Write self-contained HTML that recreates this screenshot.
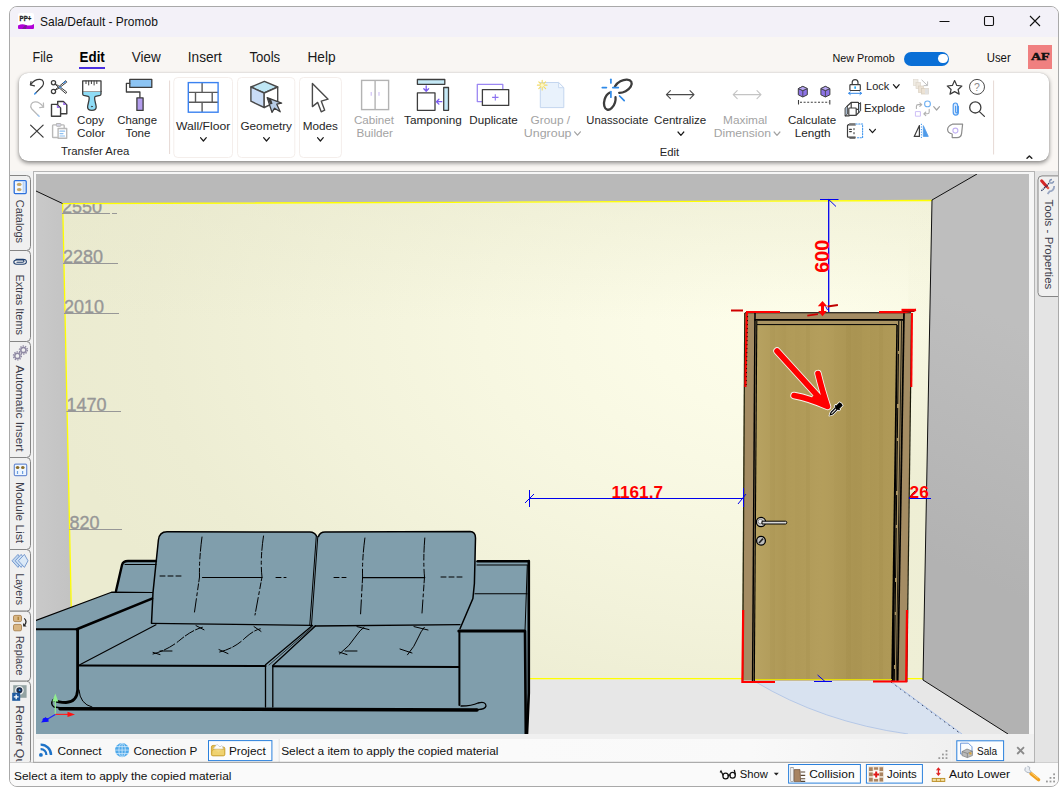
<!DOCTYPE html>
<html>
<head>
<meta charset="utf-8">
<title>Sala/Default - Promob</title>
<style>
*{box-sizing:border-box;margin:0;padding:0}
html,body{width:1061px;height:794px;overflow:hidden;background:#fff;font-family:"Liberation Sans",sans-serif;color:#1a1a1a}
.abs{position:absolute}
#win{position:absolute;left:9px;top:6px;width:1050px;height:781px;border:1px solid #a9a9a9;border-radius:8px;overflow:hidden;background:#f9f6f3}
/* everything inside #win is positioned in page coords via #in offset */
#in{position:absolute;left:-10px;top:-7px;width:1061px;height:794px}
#title{position:absolute;left:10px;top:7px;width:1048px;height:30px;background:#f3f1f8}
#title .t{position:absolute;left:39px;top:15px;font-size:12px;line-height:14px;color:#111;white-space:nowrap}
.menu{position:absolute;top:49px;font-size:14.5px;line-height:17px;color:#1a1a1a;white-space:nowrap}
#ribbon{position:absolute;left:19px;top:73px;width:1030px;height:88px;background:#fff;border-radius:9px;box-shadow:0 2px 4px rgba(0,0,0,.45),0 0 1px rgba(0,0,0,.25)}
.rl{position:absolute;font-size:12px;line-height:13px;color:#1a1a1a;text-align:center;white-space:nowrap}
.dis{color:#a6a6a6}
svg{position:absolute;overflow:visible}
.vt{position:absolute;left:10px;width:21px;font-size:12px;color:#333}
.vtxt{position:absolute;white-space:nowrap;transform-origin:0 0;transform:rotate(90deg);font-size:12.5px;line-height:14px;color:#3a3a3a;letter-spacing:.4px}
.tab{position:absolute;font-size:12px;line-height:14px;white-space:nowrap;color:#111}
</style>
</head>
<body>
<div id="win"><div id="in">

<!-- TITLE BAR -->
<div id="title"></div>
<svg style="left:17.8px;top:12.8px" width="18" height="18" viewBox="0 0 18 18">
  <rect x="0" y="0" width="16" height="16" rx="2" fill="#fff"/>
  <text x="1.6" y="7.6" font-family="Liberation Sans" font-weight="bold" font-size="8" fill="#222" stroke="#222" stroke-width=".35" textLength="11.6" lengthAdjust="spacingAndGlyphs">PP+</text>
  <path d="M0 12.5 Q4 10.5 8 12 T16 11 V15 Q16 16 15 16 H1 Q0 16 0 15Z" fill="#b100d8"/>
  <path d="M4 16 L7 12.2 L9 12.6 L8 16Z" fill="#7a1a9a"/>
</svg>
<!-- window controls -->
<svg style="left:930px;top:10px" width="120" height="24" viewBox="930 10 120 24" fill="none" stroke="#111" stroke-width="1.1">
  <path d="M939.5 21.5 H949.5"/>
  <rect x="984.5" y="16.5" width="9" height="9" rx="1.2"/>
  <path d="M1030 16 L1040 26 M1040 16 L1030 26"/>
</svg>

<!-- MENU BAR -->
<div class="abs" style="left:79px;top:67px;width:26px;height:2px;background:#4a2fe0"></div>
<div class="abs" style="left:903.7px;top:51.6px;width:45.7px;height:14px;border-radius:7px;background:#0a6fd6"></div>
<div class="abs" style="left:938.1px;top:53.8px;width:9.6px;height:9.6px;border-radius:5px;background:#fff"></div>
<div class="abs" style="left:1028px;top:45px;width:24px;height:23.6px;background:#f08080"></div>


<!-- RIBBON -->
<div id="ribbon"></div>
<!--RIB-START-->
<svg id="rib" style="left:0;top:0" width="1061" height="170" viewBox="0 0 1061 170" font-family="Liberation Sans">
<rect x="173.8" y="77.5" width="58.7" height="80" rx="4" fill="#fff" stroke="#f4eeeb" stroke-width="1"/>
<rect x="237.6" y="77.5" width="57.2" height="80" rx="4" fill="#fff" stroke="#f4eeeb" stroke-width="1"/>
<rect x="299.5" y="77.5" width="41.9" height="80" rx="4" fill="#fff" stroke="#f4eeeb" stroke-width="1"/>
<path d="M169.6,80.5 V154 M993.6,80.5 V154.5" stroke="#e6d9d4" stroke-width="1"/>
<text x="40" y="25.8" textLength="117.8" lengthAdjust="spacingAndGlyphs" font-size="12.2" fill="#111">Sala/Default - Promob</text>
<text x="32.6" y="61.7" textLength="20.3" lengthAdjust="spacingAndGlyphs" font-size="14.2" fill="#1a1a1a">File</text>
<text x="79.6" y="61.7" textLength="25.2" lengthAdjust="spacingAndGlyphs" font-size="14.2" fill="#000" font-weight="bold">Edit</text>
<text x="131.8" y="61.7" textLength="29.0" lengthAdjust="spacingAndGlyphs" font-size="14.2" fill="#1a1a1a">View</text>
<text x="187.8" y="61.7" textLength="34.1" lengthAdjust="spacingAndGlyphs" font-size="14.2" fill="#1a1a1a">Insert</text>
<text x="249.4" y="61.7" textLength="30.8" lengthAdjust="spacingAndGlyphs" font-size="14.2" fill="#1a1a1a">Tools</text>
<text x="307.4" y="61.7" textLength="28.2" lengthAdjust="spacingAndGlyphs" font-size="14.2" fill="#1a1a1a">Help</text>
<text x="832.4" y="62.4" textLength="62.3" lengthAdjust="spacingAndGlyphs" font-size="11.4" fill="#111">New Promob</text>
<text x="986.7" y="62.4" textLength="24.0" lengthAdjust="spacingAndGlyphs" font-size="12" fill="#111">User</text>
<text x="1030.9" y="60" textLength="18.7" lengthAdjust="spacingAndGlyphs" font-family="Liberation Serif" font-weight="bold" font-size="11" fill="#111" stroke="#111" stroke-width=".5">AF</text>
<text x="77.1" y="124" textLength="26.9" lengthAdjust="spacingAndGlyphs" font-size="11.7" fill="#262626">Copy</text>
<text x="77.1" y="136.5" textLength="28.1" lengthAdjust="spacingAndGlyphs" font-size="11.7" fill="#262626">Color</text>
<text x="117.2" y="124" textLength="39.8" lengthAdjust="spacingAndGlyphs" font-size="11.7" fill="#262626">Change</text>
<text x="125.4" y="136.5" textLength="25.0" lengthAdjust="spacingAndGlyphs" font-size="11.7" fill="#262626">Tone</text>
<text x="61" y="155.4" textLength="68.3" lengthAdjust="spacingAndGlyphs" font-size="11.7" fill="#262626">Transfer Area</text>
<text x="176" y="129.7" textLength="54.3" lengthAdjust="spacingAndGlyphs" font-size="11.7" fill="#262626">Wall/Floor</text>
<text x="240.5" y="129.7" textLength="51.4" lengthAdjust="spacingAndGlyphs" font-size="11.7" fill="#262626">Geometry</text>
<text x="302.8" y="129.7" textLength="35.2" lengthAdjust="spacingAndGlyphs" font-size="11.7" fill="#262626">Modes</text>
<path d="M200.5,137.60000000000002 L203.4,141.0 L206.3,137.60000000000002" fill="none" stroke="#1a1a1a" stroke-width="1.2" stroke-linecap="round" stroke-linejoin="round"/>
<path d="M263.6,137.60000000000002 L266.5,141.0 L269.4,137.60000000000002" fill="none" stroke="#1a1a1a" stroke-width="1.2" stroke-linecap="round" stroke-linejoin="round"/>
<path d="M317.5,137.60000000000002 L320.4,141.0 L323.29999999999995,137.60000000000002" fill="none" stroke="#1a1a1a" stroke-width="1.2" stroke-linecap="round" stroke-linejoin="round"/>
<text x="353.9" y="123.7" textLength="40.1" lengthAdjust="spacingAndGlyphs" font-size="11.7" fill="#a3a3a3">Cabinet</text>
<text x="356.5" y="136.5" textLength="36.5" lengthAdjust="spacingAndGlyphs" font-size="11.7" fill="#a3a3a3">Builder</text>
<text x="404.1" y="123.7" textLength="57.7" lengthAdjust="spacingAndGlyphs" font-size="11.7" fill="#262626">Tamponing</text>
<text x="469.3" y="123.7" textLength="48.5" lengthAdjust="spacingAndGlyphs" font-size="11.7" fill="#262626">Duplicate</text>
<text x="530.6" y="123.7" textLength="39.5" lengthAdjust="spacingAndGlyphs" font-size="11.7" fill="#a3a3a3">Group /</text>
<text x="523.8" y="136.5" textLength="47.7" lengthAdjust="spacingAndGlyphs" font-size="11.7" fill="#a3a3a3">Ungroup</text>
<path d="M574.6,131.8 L577.5,135.2 L580.4,131.8" fill="none" stroke="#a3a3a3" stroke-width="1.2" stroke-linecap="round" stroke-linejoin="round"/>
<text x="586.3" y="123.7" textLength="61.9" lengthAdjust="spacingAndGlyphs" font-size="11.7" fill="#262626">Unassociate</text>
<text x="654.1" y="123.8" textLength="52.1" lengthAdjust="spacingAndGlyphs" font-size="11.7" fill="#262626">Centralize</text>
<path d="M678.0,132.0 L680.9,135.39999999999998 L683.8,132.0" fill="none" stroke="#1a1a1a" stroke-width="1.2" stroke-linecap="round" stroke-linejoin="round"/>
<text x="659.8" y="155.5" textLength="19.4" lengthAdjust="spacingAndGlyphs" font-size="11.7" fill="#262626">Edit</text>
<text x="723.1" y="123.8" textLength="44.1" lengthAdjust="spacingAndGlyphs" font-size="11.7" fill="#a3a3a3">Maximal</text>
<text x="713.7" y="136.7" textLength="57.3" lengthAdjust="spacingAndGlyphs" font-size="11.7" fill="#a3a3a3">Dimension</text>
<path d="M774.1,132.0 L777,135.39999999999998 L779.9,132.0" fill="none" stroke="#a3a3a3" stroke-width="1.2" stroke-linecap="round" stroke-linejoin="round"/>
<text x="788" y="123.8" textLength="48.2" lengthAdjust="spacingAndGlyphs" font-size="11.7" fill="#262626">Calculate</text>
<text x="794.8" y="136.7" textLength="35.8" lengthAdjust="spacingAndGlyphs" font-size="11.7" fill="#262626">Length</text>
<text x="866.1" y="90.2" textLength="23.2" lengthAdjust="spacingAndGlyphs" font-size="11.7" fill="#262626">Lock</text>
<path d="M893.4,84.6 L896.3,88.0 L899.1999999999999,84.6" fill="none" stroke="#1a1a1a" stroke-width="1.2" stroke-linecap="round" stroke-linejoin="round"/>
<text x="864" y="111.8" textLength="41" lengthAdjust="spacingAndGlyphs" font-size="11.7" fill="#262626">Explode</text>
<path d="M869.6,129.3 L872.5,132.7 L875.4,129.3" fill="none" stroke="#1a1a1a" stroke-width="1.2" stroke-linecap="round" stroke-linejoin="round"/>
<path d="M933.7,106.6 L936.6,110.0 L939.5,106.6" fill="none" stroke="#a3a3a3" stroke-width="1.2" stroke-linecap="round" stroke-linejoin="round"/>
<path d="M1027,158.3 L1029.4,156 L1031.8,158.3" fill="none" stroke="#222" stroke-width="1.5" stroke-linecap="round" stroke-linejoin="round"/>
<!--ICONS-->
<g fill="none" stroke="#3d3d3d" stroke-width="1.25" stroke-linecap="round" stroke-linejoin="round">
  <!-- undo -->
  <path d="M31,81.6 L30.4,84.9 L34.4,85.8"/>
  <path d="M30.7,84.6 C33,81.4 36.5,79.2 40,79.4 C43.6,79.7 44.6,83.5 42.4,86.3 L35.8,92.9"/>
  <path d="M35.8,92.9 L34.7,94" stroke="#3b8fe8" stroke-width="1.5"/>
  <!-- redo (disabled) -->
  <g stroke="#b9b9b9">
    <path d="M43.4,103 L43.6,107.2 L39.7,107.6"/>
    <path d="M43.3,107 C41,103.5 38,101.6 35,101.8 C31.4,102 29.6,105.6 31.6,108.7 L38,115.2"/>
    <path d="M38,115.2 L39.1,116.3" stroke="#9cc4ee" stroke-width="1.5"/>
  </g>
  <!-- X -->
  <path d="M30.6,125.1 L43.1,137.1 M43.1,125.1 L30.6,137.1" stroke-width="1.3"/>
  <!-- scissors -->
  <circle cx="53.5" cy="82.8" r="2.1"/>
  <circle cx="53.5" cy="91.4" r="2.1"/>
  <path d="M55.1,89.9 L65.7,80.7 L66.7,82.2 L58.2,88.6Z" fill="#fff" stroke-width="1"/>
  <path d="M55.1,84.3 L65.7,93.5 L66.7,92 L58.2,85.6Z" fill="#fff" stroke-width="1"/>
  <path d="M63.6,83 L65.6,81.6 M59.4,86.9 L61,87.7" stroke="#3b8fe8" stroke-width="1.1"/>
  <!-- copy -->
  <path d="M57.7,104.6 V101.5 H63.4 L66.8,104.9 V113.8 H60.8" stroke-width="1.4"/>
  <path d="M63.2,101.8 V105 H66.6Z" fill="#9b6fe8" stroke="none"/>
  <path d="M51.5,104.4 H57 L60.6,108 V116.2 H51.5Z" fill="#fff" stroke-width="1.4"/>
  <path d="M56.9,104.8 V108.1 H60.3Z" fill="#9b6fe8" stroke="none"/>
  <!-- paste (disabled) -->
  <g stroke="#b9b9b9" stroke-width="1.4">
    <rect x="52.6" y="124.9" width="11.6" height="12.6" rx=".8"/>
    <rect x="56.4" y="123.5" width="4.5" height="2.8" rx=".6" fill="#d6d6e6" stroke-width="1"/>
    <rect x="58.1" y="128.5" width="8.6" height="9.8" fill="#fff"/>
    <path d="M60,131.2 H64.6 M60,133.6 H63 M60,136 H64.6" stroke="#8ec0f0" stroke-width="1.2"/>
  </g>
</g>
<!-- brush -->
<g stroke="#3d3d3d" stroke-width="1.3" stroke-linejoin="round" stroke-linecap="round">
  <path d="M82.7,91.4 H101 V94 Q101,95 100,95.3 L95.6,96.4 Q94.6,96.8 94.6,98 C94.6,101.5 96.2,104.5 96.2,107 C96.2,109.4 94.4,110.4 91.9,110.4 C89.4,110.4 87.6,109.4 87.6,107 C87.6,104.5 89.2,101.5 89.2,98 Q89.2,96.8 88.2,96.4 L83.7,95.3 Q82.7,95 82.7,94Z" fill="#8edcf6"/>
  <path d="M82.7,91.4 V80.9 H101 V91.4" fill="#fff"/>
  <path d="M86,81 V83.6 M88.7,81 V85 M91.4,81 V83.6 M94.1,81 V85 M96.8,81 V83.6" stroke-width="1"/>
  <circle cx="91.9" cy="106.6" r=".5" fill="#3d3d3d" stroke-width=".6"/>
</g>
<!-- roller -->
<g stroke="#3d3d3d" stroke-width="1.3" stroke-linejoin="round" stroke-linecap="round">
  <rect x="129.8" y="79.4" width="22" height="8" fill="#8cc4f3"/>
  <path d="M129.8,83.3 H126.4 V92 H139.9 V97.6" fill="none"/>
  <rect x="136.9" y="97.8" width="6.2" height="12.6" fill="#b39ded"/>
</g>
<!-- wall -->
<g fill="none" stroke-linejoin="miter">
  <path d="M188.3,92.4 H218 M188.3,102.2 H218 M202.1,82.5 V92.4 M195.5,92.4 V102.2 M212.2,92.4 V102.2 M202.1,102.2 V112" stroke="#5a5a5a" stroke-width="1.4"/>
  <rect x="188.3" y="82.6" width="29.8" height="29.6" stroke="#3b82f0" stroke-width="1.4"/>
</g>
<!-- geometry cube -->
<g stroke="#4a4a4a" stroke-width="1.4" stroke-linejoin="round">
  <path d="M250.9,87 L264.4,81.4 L277.7,87 L264.2,93Z" fill="#bfe7f6"/>
  <path d="M250.9,87 L264.2,93 V107.5 L250.9,101.2Z" fill="#c9dcf6"/>
  <path d="M264.2,93 L277.7,87 V101.2 L264.2,107.5Z" fill="#fff"/>
  <path d="M267.2,97.6 L281.6,103.2 L276.8,104.2 L280.2,111.8 L274.6,108.2 L272,112.4Z" fill="#b6cbe6" stroke="#3d3d3d" stroke-width="1.3"/>
  <path d="M267.2,97.6 L271,99 L272.6,103.8 L270.2,104.6Z" fill="#3d3d3d" stroke="none"/>
</g>
<!-- modes cursor -->
<path d="M312.4,83.6 V106.6 L317.7,102.4 L321.2,111.8 L324.7,110.2 L321.3,101.2 L328.1,99.2Z" fill="#fff" stroke="#4a4a4a" stroke-width="1.4" stroke-linejoin="round"/>
<!-- cabinet (disabled) -->
<g fill="none" stroke="#b3b3b3" stroke-width="1.4">
  <rect x="361.6" y="80.4" width="27" height="29.2"/>
  <path d="M375.1,80.4 V109.6"/>
  <path d="M371.2,92 V95.8 M379,92 V95.8" stroke="#cdbdf6" stroke-width="1.1"/>
</g>
<!-- tamponing -->
<g stroke="#3d3d3d" stroke-width="1.3" stroke-linejoin="round">
  <rect x="417.4" y="79.5" width="27.4" height="4.8" fill="#c5e9f6"/>
  <rect x="443.7" y="87.5" width="4.8" height="22.8" fill="#c5e9f6"/>
  <rect x="417.4" y="92.9" width="17.6" height="17.4" fill="#fff"/>
  <g stroke="#7b5cf0" stroke-width="1.3" fill="none" stroke-linecap="round">
    <path d="M426.2,86 V91 M423.8,88.8 L426.2,91.2 L428.6,88.8"/>
    <path d="M441.8,101.7 H436.6 M438.9,99.3 L436.5,101.7 L438.9,104.1"/>
  </g>
</g>
<!-- duplicate -->
<g fill="none" stroke-width="1.3" stroke-linejoin="round">
  <path d="M482.2,101.6 H477.3 V84.4 H502.8 V89" stroke="#9b86f2"/>
  <rect x="482.4" y="89.6" width="26.3" height="15.8" fill="#fff" stroke="#3d3d3d"/>
  <path d="M495.3,94.2 V100.6 M492.1,97.4 H498.5" stroke="#8a70f0" stroke-width="1.1"/>
</g>
<!-- group page (disabled) -->
<g>
  <path d="M540.3,82.5 H558.6 L563.8,87.7 V107.6 H540.3Z" fill="#e9f2fc" stroke="#c4d6ef" stroke-width="1"/>
  <path d="M558.6,82.5 V87.7 H563.8Z" fill="#f7fbff" stroke="#c4d6ef" stroke-width=".9"/>
  <g stroke="#f3dc6a" stroke-width="1.2" stroke-linecap="round">
    <path d="M542.2,80.3 V90 M537.4,85.2 H547 M538.8,81.8 L545.6,88.6 M545.6,81.8 L538.8,88.6"/>
  </g>
  <circle cx="542.2" cy="85.2" r="1.7" fill="#fff8c0"/>
</g>
<!-- unassociate -->
<g fill="none" stroke-linecap="round">
  <ellipse cx="623" cy="86.2" rx="9.4" ry="5.6" transform="rotate(-28 623 86.2)" stroke="#3d3d3d" stroke-width="2.3" stroke-dasharray="18.5 9.5 40"/>
  <ellipse cx="609.8" cy="101" rx="5.4" ry="9" transform="rotate(17 609.8 101)" stroke="#3d3d3d" stroke-width="2.3" stroke-dasharray="31 9 20"/>
  <g stroke="#2f8ae8" stroke-width="1.7">
    <path d="M610.9,79.3 V83"/>
    <path d="M602.3,87.6 H606.4"/>
    <path d="M612.8,87.6 H618.3"/>
    <path d="M610.9,91.6 V97.2"/>
    <path d="M619.6,96 L624.2,100.6"/>
  </g>
</g>
<!-- centralize / maximal arrows -->
<g fill="none" stroke-width="1.1" stroke-linecap="round" stroke-linejoin="round">
  <path d="M666.4,94.6 H694 M670.4,90.6 L666.4,94.6 L670.4,98.6 M690,90.6 L694,94.6 L690,98.6" stroke="#4a4a4a"/>
  <path d="M733.2,94.6 H761 M737.2,90.6 L733.2,94.6 L737.2,98.6 M757,90.6 L761,94.6 L757,98.6" stroke="#c4c4c4"/>
</g>
<!-- calculate length -->
<g stroke="#3d3d3d" stroke-width="1" stroke-linejoin="round">
  <g id="cb">
    <path d="M798.3,88.6 L802.8,86.4 L807.3,88.6 V94.8 L802.8,97 L798.3,94.8Z" fill="#8c73e6"/>
    <path d="M798.3,88.6 L802.8,90.6 L807.3,88.6 M802.8,90.6 V97" fill="none" stroke-width=".8"/>
    <path d="M798.3,88.6 L802.8,86.4 L807.3,88.6 L802.8,90.6Z" fill="#b7a6f3" stroke-width=".8"/>
  </g>
  <use href="#cb" x="22.6"/>
  <path d="M798.5,100 V104.4 M829.8,100 V104.4" stroke-width="1.1"/>
  <path d="M800,102.2 H829" stroke-dasharray="2 1.6" stroke-width="1.1"/>
</g>
<!-- lock -->
<g fill="none" stroke-linecap="round" stroke-linejoin="round">
  <path d="M852.2,84.6 V82.6 Q852.2,79.7 855.1,79.7 Q858,79.7 858,82.6 V84.6" stroke="#3d3d3d" stroke-width="1.2"/>
  <rect x="849.9" y="84.7" width="10.4" height="5.8" rx=".8" stroke="#3d3d3d" stroke-width="1.2" fill="#fff"/>
  <rect x="854.3" y="86.4" width="1.7" height="2.4" fill="#29a8f0" stroke="none"/>
  <path d="M848.8,93.3 H861.4 M850.3,92 L848.6,93.3 L850.3,94.6 M859.9,92 L861.6,93.3 L859.9,94.6" stroke="#2f86e8" stroke-width="1"/>
</g>
<!-- explode -->
<g fill="none" stroke="#3d3d3d" stroke-width="1.2" stroke-linejoin="round" stroke-linecap="round">
  <rect x="851.2" y="102.3" width="7.4" height="7" rx=".8"/>
  <path d="M858.9,104 L860.6,102.6 V110.8 L858.9,112.4Z" fill="#c3dbf3" stroke-width="1"/>
  <path d="M845.4,107.8 L847.3,106 V114.2 L845.4,115.8Z" fill="#c3dbf3" stroke-width="1"/>
  <rect x="848.8" y="108" width="7.4" height="7.4" rx=".8" fill="#fff"/>
  <path d="M847.3,106 L851.2,102.5 M845.4,115.9 H849 M856.3,115 L858.9,112.4"/>
</g>
<!-- third icon -->
<g fill="none" stroke-linejoin="round" stroke-linecap="round">
  <path d="M855.2,125 H848.2 Q847.5,125 847.5,125.7 V136.5 Q847.5,137.2 848.2,137.2 H855.2" stroke="#3d3d3d" stroke-width="1.2"/>
  <path d="M848,124.9 L849.6,123.9 H855.2 M849.8,138.2 H855" stroke="#3d3d3d" stroke-width="1"/>
  <path d="M849.6,129.4 H851.4 M849.6,131.6 H851.4 M854,128.6 V129.6 M854,132.6 V133.8" stroke="#3d3d3d" stroke-width="1.1"/>
  <path d="M856,124 H862.6 V137.8 H856" stroke="#3f95ee" stroke-width="1.1" stroke-dasharray="1.2 1.5"/>
</g>
<!-- disabled stacked boxes -->
<g opacity=".75">
  <rect x="913.4" y="79.6" width="4.6" height="6" fill="#ece6dc" stroke="#d9d2c6" stroke-width=".7"/>
  <rect x="916" y="82.6" width="4.6" height="6" fill="#e9e0d2" stroke="#d4cabc" stroke-width=".7"/>
  <rect x="918.6" y="86" width="4.8" height="6.4" fill="#e6d9c6" stroke="#cfc3b0" stroke-width=".7"/>
  <rect x="921.4" y="88.6" width="7.2" height="5.4" fill="#e6d9c6" stroke="#c9bca8" stroke-width=".7"/>
  <rect x="925" y="88.6" width="3.6" height="5.4" fill="#d9d9d9"/>
  <path d="M921.6,79.8 L927.4,85.4 M927.6,81.4 V85.6 H923.6" fill="none" stroke="#ababab" stroke-width="1"/>
</g>
<!-- disabled rotate icon -->
<g fill="none" stroke-linecap="round" stroke-linejoin="round">
  <circle cx="927.5" cy="103.9" r="2.9" stroke="#6fb0f2" stroke-width="1.1"/>
  <rect x="915.8" y="111.6" width="4.6" height="4.6" stroke="#cdbff6" stroke-width="1"/>
  <path d="M916.4,108.4 V106.4 Q916.4,104.6 918.2,104.6 H921.4 M919.8,102.8 L921.8,104.6 L919.8,106.4" stroke="#b0b0b0" stroke-width="1.1"/>
  <path d="M929.2,109.4 V112 Q929.2,113.8 927.4,113.8 H924 M925.8,112 L923.8,113.8 L925.8,115.6" stroke="#b0b0b0" stroke-width="1.1"/>
</g>
<!-- mirror icon -->
<g stroke-linejoin="round">
  <path d="M919.4,125.6 V136.4 H914.2Z" fill="none" stroke="#3d3d3d" stroke-width="1.2"/>
  <path d="M921.4,123.8 V138.4" stroke="#3f95ee" stroke-width="1" stroke-dasharray="1.2 1.4" fill="none"/>
  <path d="M923.3,125.6 V136.4 H928.3Z" fill="#4f9bea" stroke="#4f9bea" stroke-width=".8"/>
</g>
<!-- star -->
<path d="M954.6,80.6 L956.8,85.4 L961.9,86 L958.1,89.5 L959.2,94.1 L954.6,91.6 L950,94.1 L951.1,89.5 L947.3,86 L952.4,85.4Z" fill="none" stroke="#3d3d3d" stroke-width="1.2" stroke-linejoin="round"/>
<!-- paperclip -->
<path d="M958.4,106.4 V112 Q958.4,115.2 955.8,115.2 Q953.2,115.2 953.2,112 V105.6 Q953.2,103 955.4,103 Q957.6,103 957.6,105.6 V111.6 Q957.6,112.9 956.6,112.9 Q955.6,112.9 955.6,111.6 V106.4" fill="#dbeafc" stroke="#4f9bf0" stroke-width="1.2" stroke-linecap="round"/>
<!-- tag shape -->
<g fill="none" stroke-linejoin="round">
  <path d="M952.4,124.2 H962.6 L961.6,133.4 Q961.2,137.6 957,137.6 H952.2 V134 Q947.6,133.2 947.6,129.6 Q947.6,126 952.4,124.2Z" stroke="#8c8c8c" stroke-width="1.2"/>
  <circle cx="955.4" cy="130.6" r="2.5" stroke="#c3b2f4" stroke-width="1.1"/>
</g>
<!-- help -->
<circle cx="977" cy="86.9" r="7.5" fill="none" stroke="#4a4a4a" stroke-width="1"/>
<text x="977" y="90.6" font-size="10.5" fill="#8a8a8a" text-anchor="middle">?</text>
<!-- search -->
<g fill="none" stroke="#3d3d3d" stroke-width="1.3" stroke-linecap="round">
  <circle cx="975.3" cy="107.4" r="5.6"/>
  <path d="M979.4,111.6 L984.4,116.4"/>
</g>

</svg>
<!--RIB-END-->

<!-- VIEWPORT placeholder -->
<div class="abs" style="left:33px;top:171px;width:1002px;height:592px;background:#f6f6f6;border:1px solid #b4b4b4"></div>
<div class="abs" id="vp" style="left:36px;top:174px;width:993px;height:560px;background:#b9b9b9;overflow:hidden">
<!--SCENE-START-->
<svg id="scene" style="left:0;top:0" width="993" height="560" viewBox="36 174 993 560">
<defs>
  <radialGradient id="gBack" gradientUnits="userSpaceOnUse" cx="800" cy="325" r="760" gradientTransform="translate(800,325) scale(1,0.62) translate(-800,-325)">
    <stop offset="0" stop-color="#fefeeb"/><stop offset=".2" stop-color="#fbfbe7"/><stop offset=".42" stop-color="#f7f7e1"/><stop offset=".65" stop-color="#f2f2da"/><stop offset=".85" stop-color="#ededd3"/><stop offset="1" stop-color="#ebebd0"/>
  </radialGradient>
  <linearGradient id="gTopShade" x1="0" y1="200" x2="0" y2="320" gradientUnits="userSpaceOnUse">
    <stop offset="0" stop-color="#e6e6ca" stop-opacity=".4"/><stop offset="1" stop-color="#e6e6ca" stop-opacity="0"/>
  </linearGradient>
  <linearGradient id="gLeft" x1="36" y1="0" x2="70" y2="0" gradientUnits="userSpaceOnUse">
    <stop offset="0" stop-color="#c9c9c9"/><stop offset="1" stop-color="#c3c3c3"/>
  </linearGradient>
  <linearGradient id="gRight" x1="930" y1="560" x2="1029" y2="330" gradientUnits="userSpaceOnUse">
    <stop offset="0" stop-color="#b2b2b2"/><stop offset=".5" stop-color="#b8b8b8"/><stop offset="1" stop-color="#bebebe"/>
  </linearGradient>
  <linearGradient id="gStrip" x1="0" y1="200" x2="0" y2="680" gradientUnits="userSpaceOnUse">
    <stop offset="0" stop-color="#eeeed4" stop-opacity="0"/><stop offset=".25" stop-color="#eeeed4" stop-opacity=".25"/><stop offset=".6" stop-color="#eeeed4" stop-opacity="1"/><stop offset="1" stop-color="#efefd6" stop-opacity="1"/>
  </linearGradient>
  <linearGradient id="gDoor" x1="757" y1="0" x2="897" y2="0" gradientUnits="userSpaceOnUse">
    <stop offset="0" stop-color="#b7a261"/><stop offset=".2" stop-color="#ae9856"/><stop offset=".45" stop-color="#b49e5c"/><stop offset=".7" stop-color="#aa9452"/><stop offset="1" stop-color="#b09a58"/>
  </linearGradient>
</defs>
<!-- ceiling -->
<rect x="36" y="174" width="993" height="560" fill="#b9b9b9"/>
<!-- floor -->
<polygon points="36,679 923,679 1008,734 36,734" fill="#e7e7e7"/>
<!-- left wall -->
<polygon points="36,191 62.5,203.5 72.6,680 72.6,734 36,734" fill="url(#gLeft)"/>
<!-- back wall -->
<polygon points="62.5,203.5 932,200 923,680 72.6,680" fill="url(#gBack)"/>
<polygon points="62.5,203.5 932,200 930,320 65,320" fill="url(#gTopShade)"/>
<polygon points="909,200.2 932,200 923,680 906,680" fill="url(#gStrip)"/>
<!-- right wall -->
<polygon points="932,200 977,174 1029,174 1029,734 1008,734 923,680" fill="url(#gRight)"/>
<!-- yellow wall outline -->
<path d="M72.8,680 L62.7,203.7 L932,200.5 M529,678.6 L923,678.6" fill="none" stroke="#ffff00" stroke-width="1.3"/>
<!-- corner lines -->
<path d="M36,191 L62.5,203.5 M977,174 L932,200 L923,680 L1008,734" fill="none" stroke="#111" stroke-width="1"/>
<!-- door swing -->
<path d="M755,681.5 Q822,722 908,734 L961,734 L891,681.5 Z" fill="#d8e2f0"/>
<path d="M755,681.5 Q822,722 908,734" fill="none" stroke="#a9c0e6" stroke-width=".8"/>
<path d="M891,682 L961,734" fill="none" stroke="#223" stroke-width="1" stroke-dasharray="1.5 4"/>
<path d="M893,683 L962,734" fill="none" stroke="#8fb0ea" stroke-width=".7"/>

<!-- height labels -->
<g font-family="Liberation Sans" font-size="18" fill="#979797" stroke="#979797" stroke-width=".35">
  <clipPath id="cw"><polygon points="62,204.2 932,201 923,680 72,680"/></clipPath>
  <g clip-path="url(#cw)"><text x="62" y="213">2550</text></g>
  <text x="63" y="262.7">2280</text>
  <text x="64" y="312.7">2010</text>
  <text x="66.5" y="411">1470</text>
  <text x="69.5" y="529">820</text>
</g>
<path d="M62,213.5 H110 M112,213.5 H117 M63,263.5 H118 M64,313.5 H119 M66.5,411.5 H121 M69.5,529.5 H122" stroke="#979797" stroke-width="1" fill="none"/>

<!-- DOOR -->
<g id="door">
  <!-- outer frame -->
  <polygon points="744.5,312.5 911.5,312.5 906.5,680.6 742,680.6" fill="#a48c63"/>
  <!-- inner trim -->
  <polygon points="755.5,320.5 902,320.5 898,680 753,680" fill="#aa9463"/>
  <!-- panel -->
  <polygon points="757,325 896.5,325 891.5,679.4 754.5,679.4" fill="url(#gDoor)"/>
  <!-- grain -->
  <g opacity=".32">
    <rect x="770" y="325" width="5" height="355" fill="#9c8646" opacity=".35"/>
    <rect x="786" y="325" width="9" height="355" fill="#c2ad68" opacity=".4"/>
    <rect x="806" y="325" width="4" height="355" fill="#96803f" opacity=".35"/>
    <rect x="822" y="325" width="12" height="355" fill="#bfa963" opacity=".4"/>
    <rect x="846" y="325" width="5" height="355" fill="#98823f" opacity=".35"/>
    <rect x="862" y="325" width="8" height="355" fill="#c0aa65" opacity=".4"/>
    <rect x="879" y="325" width="4" height="355" fill="#98823f" opacity=".3"/>
  </g>
  <!-- black lines -->
  <path d="M754.5,319.8 H903" stroke="#000" stroke-width="1.8" fill="none"/>
  <path d="M757,324.6 H897" stroke="#000" stroke-width="1" fill="none"/>
  <path d="M744.8,313 L742.6,682" stroke="#2a2a10" stroke-width="1.3" fill="none"/>
  <path d="M755,313 L752.6,681" stroke="#000" stroke-width="1.5" fill="none"/>
  <path d="M756.8,321 L754.3,681" stroke="#000" stroke-width="1.1" fill="none"/>
  <polygon points="896.3,325 897.8,325 893.8,681 891.2,681" fill="#000"/>
  <path d="M898.8,321 L894.3,681" stroke="#000" stroke-width="1" fill="none" stroke-dasharray="30 3 50 4"/>
  <path d="M904,312.5 L897.7,681" stroke="#000" stroke-width="1.7" fill="none"/>
  <path d="M901.6,320.5 L896.2,681" stroke="#000" stroke-width=".8" fill="none"/>
  <path d="M911.6,313 L906.8,682" stroke="#1a1a08" stroke-width="1.2" fill="none"/>
  <path d="M745,312.7 H911" stroke="#000" stroke-width="1.1" fill="none"/>
  <!-- handle -->
  <circle cx="761" cy="522" r="4.6" fill="#c9c9c9" stroke="#000" stroke-width="1.2"/>
  <circle cx="760.3" cy="521.5" r="2.2" fill="#f2f2f2" stroke="#555" stroke-width=".6"/>
  <path d="M762,521.2 H785.5 Q786.8,521.2 786.8,522.6 Q786.8,524 785.5,524 H762Z" fill="#d8d8d8" stroke="#000" stroke-width="1"/>
  <circle cx="761" cy="540.8" r="4.4" fill="#bdbdbd" stroke="#000" stroke-width="1.3"/>
  <path d="M759,543 L763,538.6" stroke="#222" stroke-width="1.6"/>
</g>

<path d="M755,679.6 H892" stroke="#e8e000" stroke-width="1" fill="none"/>
<!-- red selection marks on door -->
<g stroke="#ff0000" fill="none">
  <path d="M746,312 H780" stroke-width="2.2"/>
  <path d="M746.8,312 L745.4,387" stroke-width="2.2"/>
  <path d="M879,312.2 H905 L916,309.8" stroke-width="2.2"/>
  <path d="M901.5,310 H916" stroke-width="2.4"/>
  <path d="M902.5,311.4 H914.5" stroke="#a80000" stroke-width="1.2"/>
  <path d="M912,313 L911.3,387" stroke-width="2"/>
  <path d="M743.2,610 L742.4,682 H775" stroke-width="2.2"/>
  <path d="M907,610 L906.2,681.5 H873" stroke-width="2.2"/>
  <path d="M731,310.5 H743" stroke="#d00000" stroke-width="2"/>
</g>
<path d="M747.6,316 L746.2,387" stroke="#300" stroke-width="1" stroke-dasharray="1.2 2.8" fill="none"/>

<!-- dimension: horizontal 1161.7 -->
<g stroke="#0000ee" stroke-width="1" fill="none">
  <path d="M529,498.5 H744"/>
  <path d="M529.5,490 V507 M525,503 L534,494"/>
  <path d="M743.5,488 V507 M738,504 L746,494"/>
  <path d="M828.7,199.5 V312" stroke-width="1.3"/>
  <path d="M820,199.5 H838.5 M828.7,199.5 L836,206.5"/>
  <path d="M909,498.5 H931 M909,498 L915,491"/>
  <path d="M814,681.5 H832 M817.6,675 L825,681.5"/>
  <path d="M827.6,310 L825.6,306.4"/>
</g>
<g font-family="Liberation Sans" font-weight="bold" fill="#ff0000">
  <text x="637.2" y="498" font-size="17.2" text-anchor="middle">1161.7</text>
  <text x="909.6" y="497.6" font-size="17.2">26</text>
  <text transform="translate(828.9,256.2) rotate(-90)" font-size="19.8" text-anchor="middle">600</text>
</g>
<!-- small red move gizmo at top of door -->
<g fill="#ff0000" stroke="none">
  <path d="M822.5,301 L827.2,306.3 H824 V311 H826.8 L822.5,316.2 L818.2,311 H821 V306.3 H817.8Z"/>
  <path d="M827.4,305.4 L837.8,304 L838,306 L827.6,307.6Z" fill="#c00000"/>
  <path d="M807.2,314.8 L817.8,313.2 L818,315 L807.4,316.6Z" fill="#d00000"/>
</g>

<!-- SOFA -->
<g id="sofa">
  <path d="M36,620.5 L111.5,592.2 L116,591 L122,565 Q123,560.5 128,560.5 L156,560.5 L158.4,540 Q159.3,531.8 167,531.8 L310,532 Q315,532 317.5,536.5 Q319.5,532 325,532 L470,531.5 Q475.5,531.8 475.5,538 L475.5,560.8 L529.3,560.8 L529.6,693 L527.6,734 L36,734Z" fill="#809eac"/>
  <g fill="none" stroke="#000" stroke-linejoin="round" stroke-linecap="round">
    <!-- left armrest -->
    <path d="M36,620.5 L111.5,592.2 L152.5,592.5" stroke-width="1.2"/>
    <path d="M76.8,629.3 L152,598.6" stroke-width="2.6"/>
    <path d="M36,629.3 H76.8" stroke-width="2"/>
    <path d="M77.6,630 V690 Q77,702 66,702.5 Q58,702.5 54,700" stroke-width="2.8"/>
    <path d="M79,690 Q80,704 92,707" stroke-width="1"/>
    <path d="M53,700 Q50,704 54,707 L62,708" stroke-width="1.4"/>
    <!-- back armrest piece -->
    <path d="M116,591 L122,565 Q123,561 128,561 L156,561" stroke-width="2.4"/>
    <path d="M125,564.5 H156" stroke-width="1"/>
    <!-- back cushion 1 -->
    <path d="M151.5,623 L153,592.5 L158.4,540 Q159.3,531.8 167,531.8 L310,532 Q314.5,532.2 316.5,536" stroke-width="1.5"/>
    <path d="M151.5,623.3 L312,625.3" stroke-width="1.3"/>
    <path d="M316.3,536 L309.8,625 M317.8,536.5 L311.5,625" stroke-width="1"/>
    <!-- back cushion 2 -->
    <path d="M318.5,536.5 Q320,532 325,532 L470,531.5 Q475.5,531.8 475.5,538 L474.4,583.5 L472.9,598.5 L460,628.8" stroke-width="1.5"/>
    <path d="M315,626 L460,624.6" stroke-width="1.3"/>
    <!-- seat gap -->
    <path d="M312.4,625.5 L265.5,664.8 V707 M315.4,626 L272.8,665.5 V707" stroke-width="1.3"/>
    <path d="M313.8,626 L269,665" stroke-width=".7"/>
    <!-- seat -->
    <path d="M156,624.8 L79.8,664.8" stroke-width="1.1"/>
    <path d="M79.5,665.5 L265.5,666" stroke-width="2"/>
    <path d="M273,666.2 L459,667" stroke-width="2"/>
    <path d="M60,708.8 L477,710" stroke-width="3.5"/>
    <path d="M461,706 Q472,706 478,703 Q486,701 486,706 Q485,710 476,709.5" stroke-width="1.3"/>
    <!-- right armrest -->
    <path d="M477.5,561.2 H528.5" stroke-width="2.4"/>
    <path d="M477,565 H527" stroke-width="1"/>
    <path d="M528.8,561 V693 L527,734" stroke-width="2.6"/>
    <path d="M475,593.7 H527" stroke-width="1.1"/>
    <path d="M527.3,565 L525,631" stroke-width="1"/>
    <path d="M458.8,631 H524.3" stroke-width="3"/>
    <path d="M459.4,631 V705" stroke-width="2"/>
    <path d="M525,631 L525.8,734" stroke-width="2.6"/>
    <!-- tufting -->
    <g stroke-width="1" stroke-dasharray="14 2 6 3 3 3">
      <path d="M202,537 Q199,560 199.5,577 L194.5,612"/>
      <path d="M263.5,536 Q260,560 262,577 L255,615"/>
      <path d="M364.9,538 Q362,560 362.6,577 L360.5,615.5"/>
      <path d="M424.8,538 Q423,560 424.5,577 L422,613"/>
    </g>
    <path d="M202.5,577.5 H262 M362.6,577.6 H424.8" stroke-width="1.2"/>
    <path d="M160,576 H182 M276,577.5 H286 M334,577.5 H346 M441,577 H463" stroke-width="1" stroke-dasharray="5 3"/>
    <g stroke-width="1">
      <path d="M153,654 Q168,650 180,640 Q192,630 202.4,627.3" stroke-dasharray="10 2 12 3 8 2"/>
      <path d="M153,652.4 L160,654.6 M196,625.6 L204,629.8 M160,651 H172"/>
      <path d="M219.7,652 Q235,648 245,638 Q254,630 260.3,628.8" stroke-dasharray="12 2 10 3"/>
      <path d="M219,649.6 L228,653.6 M254,626.6 L261,631.4"/>
      <path d="M339.4,654 Q350,646 356,636 Q360,630 364,627.3"/>
      <path d="M339,652 L347,654.6 M357,626.6 L369,629.6 M345,651 H357"/>
      <path d="M407.5,654.8 Q415,646 418,638 Q421,631 424.3,627.3"/>
      <path d="M400,649 L412,653 M414,626.6 L428,630"/>
    </g>
    </g>
</g>

<!-- axis gizmo -->
<g>
  <path d="M55.3,714.4 V699" stroke="#90ee90" stroke-width="1.2"/>
  <path d="M55.3,693.5 L58.3,701.5 H52.3Z" fill="#90ee90"/>
  <path d="M55.3,714.4 H69" stroke="#ff2020" stroke-width="1.2"/>
  <path d="M75,714.4 L67.5,711.8 V717Z" fill="#ff1010"/>
  <path d="M55.3,714.4 L46,720" stroke="#2020ff" stroke-width="1.2"/>
  <path d="M41,722.5 L45.5,717 L49,721.5Z" fill="#1010ff"/>
  <ellipse cx="45.5" cy="719.8" rx="3" ry="2" fill="#1010ff"/>
</g>

<!-- red hand-drawn arrow -->
<g>
  <path d="M777,351 L825.5,404.5 M818,373.5 Q822.5,392 827.5,406.5 Q810,398.5 794,395.5" fill="none" stroke="#fff" stroke-width="7.4" stroke-linecap="round" stroke-linejoin="round" opacity=".9"/>
  <path d="M777,351 L825.5,404.5 M818,373.5 Q822.5,392 827.5,406.5 Q810,398.5 794,395.5" fill="none" stroke="#ff0000" stroke-width="5.6" stroke-linecap="round" stroke-linejoin="round"/>
  <path d="M816,392 L826,405.5 L811,399Z" fill="#ff0000"/>
</g>
<!-- eyedropper cursor -->
<g transform="translate(835.3,409.7) rotate(45)">
  <path d="M-2.3,-8.2 Q0,-9.4 2.3,-8.2 V-3.6 H3.2 V-2 H1.7 V5 L0,8.4 L-1.7,5 V-2 H-3.2 V-3.6 H-2.3Z" fill="#000" stroke="#fff" stroke-width="1.5" stroke-linejoin="round"/>
  <path d="M-2.3,-8.2 Q0,-9.4 2.3,-8.2 V-3.6 H3.2 V-2 H1.7 V5 L0,8.4 L-1.7,5 V-2 H-3.2 V-3.6 H-2.3Z" fill="#000"/>
  <path d="M0,-1 V5.4" stroke="#d8d8d8" stroke-width="1.1"/>
</g>
</svg>
<!--SCENE-END-->
</div>

<!--CHROME-START-->
<svg id="chrome" style="left:0;top:0" width="1061" height="794" viewBox="0 0 1061 794" font-family="Liberation Sans">
<rect x="10" y="171" width="23" height="592" fill="#f3f3f3"/>
<path d="M9.5,175.5 H26.5 Q30.5,175.5 30.5,179.5 V246.5 Q30.5,250.5 26.5,250.5 H9.5" fill="#f0f0f0" stroke="#858585" stroke-width="1"/>
<path d="M9.5,250.5 H26.5 Q30.5,250.5 30.5,254.5 V337.5 Q30.5,341.5 26.5,341.5 H9.5" fill="#f0f0f0" stroke="#858585" stroke-width="1"/>
<path d="M9.5,341.5 H26.5 Q30.5,341.5 30.5,345.5 V453.5 Q30.5,457.5 26.5,457.5 H9.5" fill="#f0f0f0" stroke="#858585" stroke-width="1"/>
<path d="M9.5,457.5 H26.5 Q30.5,457.5 30.5,461.5 V545.5 Q30.5,549.5 26.5,549.5 H9.5" fill="#f0f0f0" stroke="#858585" stroke-width="1"/>
<path d="M9.5,549.5 H26.5 Q30.5,549.5 30.5,553.5 V607.2 Q30.5,611.2 26.5,611.2 H9.5" fill="#f0f0f0" stroke="#858585" stroke-width="1"/>
<path d="M9.5,611.2 H26.5 Q30.5,611.2 30.5,615.2 V677.2 Q30.5,681.2 26.5,681.2 H9.5" fill="#f0f0f0" stroke="#858585" stroke-width="1"/>
<path d="M9.5,681.2 H26.5 Q30.5,681.2 30.5,685.2 V760.5 Q30.5,764.5 26.5,764.5 H9.5" fill="#f0f0f0" stroke="#858585" stroke-width="1"/>
<text transform="translate(16,199.7) rotate(90)" textLength="43.4" lengthAdjust="spacingAndGlyphs" font-size="11.7" fill="#3d3d4a">Catalogs</text>
<text transform="translate(16,274.5) rotate(90)" textLength="60.4" lengthAdjust="spacingAndGlyphs" font-size="11.7" fill="#3d3d4a">Extras Items</text>
<text transform="translate(16,365.3) rotate(90)" textLength="86.3" lengthAdjust="spacingAndGlyphs" font-size="11.7" fill="#3d3d4a">Automatic Insert</text>
<text transform="translate(16,482) rotate(90)" textLength="61.2" lengthAdjust="spacingAndGlyphs" font-size="11.7" fill="#3d3d4a">Module List</text>
<text transform="translate(16,573.4) rotate(90)" textLength="31.6" lengthAdjust="spacingAndGlyphs" font-size="11.7" fill="#3d3d4a">Layers</text>
<text transform="translate(16,635.8) rotate(90)" textLength="39.7" lengthAdjust="spacingAndGlyphs" font-size="11.7" fill="#3d3d4a">Replace</text>
<clipPath id="crq"><rect x="9" y="700" width="22" height="61.5"/></clipPath>
<g clip-path="url(#crq)"><text transform="translate(16,705.3) rotate(90)" textLength="81.7" lengthAdjust="spacingAndGlyphs" font-size="11.7" fill="#3d3d4a">Render Quality</text></g>
<!-- catalogs icon -->
<rect x="14.2" y="180.6" width="12" height="13" rx="1" fill="#f3f8ff" stroke="#2a6fdb" stroke-width="1.3"/>
<ellipse cx="19.2" cy="184.4" rx="2.4" ry="1.6" fill="#c6a86a"/><ellipse cx="19.2" cy="189.6" rx="2.4" ry="1.6" fill="#c6a86a"/>
<path d="M23.6,182 V192.6" stroke="#b9d4f6" stroke-width="2"/>
<!-- paperclip (horizontal) -->
<path d="M16,259 H23 Q26.4,259 26.4,261.5 Q26.4,264 23,264 H16.6 Q13.8,264 13.8,261.9 Q13.8,259.8 16.6,259.8 H22.6 Q24,259.8 24,260.9 Q24,262 22.6,262 H17" fill="none" stroke="#1f3f6e" stroke-width="1.1" stroke-linecap="round" transform="translate(0,.2)"/>
<!-- gears -->
<g fill="none" stroke="#8f89a3">
  <circle cx="17.4" cy="355.9" r="2.6" stroke-width="1.5"/>
  <circle cx="17.4" cy="355.9" r="4" stroke-width="1.3" stroke-dasharray="1.4 1.1"/>
  <circle cx="23.4" cy="350" r="2.6" stroke-width="1.5"/>
  <circle cx="23.4" cy="350" r="4" stroke-width="1.3" stroke-dasharray="1.4 1.1"/>
</g>
<!-- module list -->
<rect x="14.3" y="464.2" width="12.4" height="11.4" rx="1.2" fill="#eef6ff" stroke="#6f8fd2" stroke-width="1.2"/>
<ellipse cx="17.6" cy="467.6" rx="1.8" ry="1.5" fill="#8a6d2a"/><ellipse cx="22.8" cy="467.6" rx="1.8" ry="1.5" fill="#8a6d2a"/>
<path d="M17.5,471 V474 M22.6,471 V474" stroke="#6f9fe0" stroke-width="1.2"/>
<!-- layers -->
<g stroke="#6d93cc" stroke-width=".9">
  <path d="M12,560.8 L18,554.4 L22,560.8 L18,567.4Z" fill="#c4d9f0"/>
  <path d="M15.2,560.8 L21.2,554.4 L25.2,560.8 L21.2,567.4Z" fill="#cfe1f4"/>
  <path d="M18.4,560.8 L24.4,554.4 L28,560.8 L24.4,567.4Z" fill="#dbe9f7"/>
</g>
<!-- replace -->
<rect x="13.5" y="615.4" width="8" height="6.2" rx="1.4" fill="#d9b683" stroke="#a9814f" stroke-width=".9"/>
<rect x="13.5" y="624.4" width="8" height="6.4" rx="1.4" fill="#d9b683" stroke="#a9814f" stroke-width=".9"/>
<rect x="17.6" y="616.8" width="1.2" height="3.2" fill="#a67c2c"/>
<path d="M24.2,618.4 Q27.6,621.4 24.6,625" fill="none" stroke="#222" stroke-width="1.2"/>
<path d="M23,623 L26.6,626.4 L23.2,626.6Z" fill="#222"/>
<!-- render quality -->
<rect x="13.2" y="685.2" width="13.4" height="12.6" fill="#93a3a3"/>
<circle cx="19.4" cy="690.3" r="3.7" fill="#1c2c4c" stroke="#f4f4f4" stroke-width="1.3"/>
<circle cx="19.6" cy="690.2" r=".9" fill="#2f9cf0"/>
<rect x="12.2" y="692.8" width="8" height="8" fill="#1f5aa0"/>
<path d="M16.2,694.4 V699.2 M13.8,696.8 H18.6" stroke="#fff" stroke-width="1.3"/>

<rect x="1035" y="171" width="24" height="592" fill="#e4e4e4"/>
<path d="M1059,175.9 H1042 Q1038,175.9 1038,179.9 V292.5 Q1038,296.5 1042,296.5 H1059" fill="#f0f0f0" stroke="#858585" stroke-width="1"/>
<text transform="translate(1045.2,199.4) rotate(90)" textLength="90.0" lengthAdjust="spacingAndGlyphs" font-size="11.7" fill="#3d3d4a">Tools - Properties</text>
<!-- tools icon -->
<path d="M1041.6,180.8 L1046.6,186.4" stroke="#d42626" stroke-width="3" stroke-linecap="round"/>
<path d="M1047.4,187.4 L1048.8,188.8" stroke="#e04a3a" stroke-width="2.2"/>
<path d="M1041.4,190.8 L1049.4,183" stroke="#20305c" stroke-width="1.4" stroke-dasharray="1.2 .7"/>
<path d="M1049.6,182.6 Q1049.2,179.6 1052,179.4 M1050.2,183 Q1053.2,183.6 1053.6,181" fill="none" stroke="#8596b6" stroke-width="1.5"/>
<path d="M1054.2,186 Q1054,191 1049.6,191.4 L1047.6,194" fill="none" stroke="#98a6c2" stroke-width="1.8"/>

<rect x="36" y="734" width="998" height="28" fill="#f0f0f0"/>
<linearGradient id="gtb" x1="0" y1="0" x2="1" y2="0"><stop offset="0" stop-color="#fbfbfb"/><stop offset=".7" stop-color="#f9f9f9"/><stop offset="1" stop-color="#f0f0f0"/></linearGradient>
<rect x="36" y="739" width="916" height="23" fill="#f8f8f8"/>
<rect x="279.5" y="739" width="672" height="23" fill="url(#gtb)"/>
<path d="M279.2,739 V762" stroke="#e2e2e2" stroke-width="1"/>
<text x="57.4" y="755" textLength="44.2" lengthAdjust="spacingAndGlyphs" font-size="11.7" fill="#111">Connect</text>
<text x="133.4" y="755" textLength="64.0" lengthAdjust="spacingAndGlyphs" font-size="11.7" fill="#111">Conection P</text>
<rect x="208.5" y="740.6" width="63.4" height="20" fill="#fcfdfe" stroke="#2a80dc" stroke-width="1"/>
<text x="229" y="755" textLength="36.7" lengthAdjust="spacingAndGlyphs" font-size="11.7" fill="#111">Project</text>
<text x="281.2" y="755" textLength="217.2" lengthAdjust="spacingAndGlyphs" font-size="11.7" fill="#111">Select a item to apply the copied material</text>
<rect x="956.8" y="740.8" width="46.8" height="19.8" fill="#fcfdfe" stroke="#2a80dc" stroke-width="1"/>
<text x="977" y="755" textLength="20.1" lengthAdjust="spacingAndGlyphs" font-size="11.7" fill="#111">Sala</text>
<path d="M1017.2,747.2 L1024,754 M1024,747.2 L1017.2,754" stroke="#8a8a8a" stroke-width="1.8"/>
<rect x="945.6" y="750.0" width="1.8" height="1.8" fill="#9a9a9a"/><rect x="942.0" y="753.6" width="1.8" height="1.8" fill="#9a9a9a"/><rect x="945.6" y="753.6" width="1.8" height="1.8" fill="#9a9a9a"/><rect x="938.4" y="757.2" width="1.8" height="1.8" fill="#9a9a9a"/><rect x="942.0" y="757.2" width="1.8" height="1.8" fill="#9a9a9a"/><rect x="945.6" y="757.2" width="1.8" height="1.8" fill="#9a9a9a"/>
<rect x="10" y="762.5" width="1049" height="25" fill="#fafafa"/>
<path d="M10,762.5 H1059" stroke="#cfcfcf" stroke-width="1"/>
<path d="M33,762.3 H1035" stroke="#a2a2a2" stroke-width="1"/>
<text x="14" y="780" textLength="217.4" lengthAdjust="spacingAndGlyphs" font-size="11.7" fill="#111">Select a item to apply the copied material</text>
<text x="739.8" y="778" textLength="28.1" lengthAdjust="spacingAndGlyphs" font-size="11.7" fill="#111">Show</text>
<path d="M773.8,772.8 H778.8 L776.3,775.6Z" fill="#222"/>
<rect x="788.6" y="764.5" width="71.8" height="18.6" fill="#fcfdfe" stroke="#2a80dc" stroke-width="1"/>
<text x="809.2" y="778" textLength="45.4" lengthAdjust="spacingAndGlyphs" font-size="11.7" fill="#111">Collision</text>
<rect x="866.4" y="764.5" width="56" height="18.6" fill="#fcfdfe" stroke="#2a80dc" stroke-width="1"/>
<text x="887" y="778" textLength="29.8" lengthAdjust="spacingAndGlyphs" font-size="11.7" fill="#111">Joints</text>
<text x="948.9" y="778" textLength="61.1" lengthAdjust="spacingAndGlyphs" font-size="11.7" fill="#111">Auto Lower</text>
<rect x="1053.2" y="773.4" width="1.8" height="1.8" fill="#9a9a9a"/><rect x="1049.6" y="777.0" width="1.8" height="1.8" fill="#9a9a9a"/><rect x="1053.2" y="777.0" width="1.8" height="1.8" fill="#9a9a9a"/><rect x="1046.0" y="780.6" width="1.8" height="1.8" fill="#9a9a9a"/><rect x="1049.6" y="780.6" width="1.8" height="1.8" fill="#9a9a9a"/><rect x="1053.2" y="780.6" width="1.8" height="1.8" fill="#9a9a9a"/>
<!-- rss / connect -->
<g fill="none" stroke="#1e73c8">
  <circle cx="40.9" cy="754.9" r="1.9" fill="#1e73c8" stroke="none"/>
  <path d="M40.6,749.2 A5.6,5.6 0 0 1 46.4,755" stroke-width="2.2"/>
  <path d="M40.6,744.6 A10.2,10.2 0 0 1 51,755" stroke-width="2.4"/>
</g>
<!-- globe -->
<circle cx="122.1" cy="750.1" r="7" fill="#4fa9ea"/>
<g stroke="#cfe8fb" stroke-width=".8" fill="none">
  <ellipse cx="122.1" cy="750.1" rx="3.2" ry="7"/>
  <path d="M115.1,750.1 H129.1 M116,746.6 H128.2 M116,753.6 H128.2 M122.1,743.1 V757.1"/>
</g>
<!-- folder -->
<path d="M211.4,747 Q211.4,745.4 213,745.4 H216 L217.4,747 H223.4 Q224.8,747 224.8,748.4 V754.4 Q224.8,755.8 223.4,755.8 H212.8 Q211.4,755.8 211.4,754.4Z" fill="#e6bf4c" stroke="#c49a2a" stroke-width=".8"/>
<path d="M213.4,748.4 L217,744.2 L220,747 L221.6,745.4 L223.4,748.6 L218.4,752.4Z" fill="#fdfdfd" stroke="#b9c2d4" stroke-width=".6"/>
<path d="M212,751 L214,749.2 H224.6 V754.4 Q224.6,755.6 223.4,755.6 H212.8 Q211.6,755.6 211.8,754.4Z" fill="#f2d674" stroke="#c9a030" stroke-width=".6" opacity=".9"/>
<!-- sala icon -->
<path d="M960.6,743.2 H968.4 L972,746.8 V754 H960.6Z" fill="#fbfdff" stroke="#5f8fd8" stroke-width=".9"/>
<path d="M962,751.6 L967,749 L972.4,751.2 V755.6 L967.4,757.6 L962,755.6Z" fill="#b9b9b9" stroke="#7a7a7a" stroke-width=".7"/>
<path d="M962,751.6 L967.4,753.4 L972.4,751.2 M967.4,753.4 V757.6" fill="none" stroke="#6e6e6e" stroke-width=".6"/>
<circle cx="970.4" cy="753.4" r="1.2" fill="#d9a53a"/>
<!-- glasses -->
<g fill="none" stroke="#111" stroke-width="1.3" stroke-linecap="round">
  <ellipse cx="725.6" cy="776" rx="2.7" ry="2.9"/>
  <ellipse cx="732.6" cy="775.2" rx="2.7" ry="2.9"/>
  <path d="M728.2,775.6 Q729.2,774.4 730,775.2 M723,775 L721,771 L720.4,772 M735.2,774 L734.4,770.4"/>
</g>
<!-- collision icon -->
<rect x="790.8" y="767.4" width="2.4" height="14.2" fill="#fff" stroke="#8a8a8a" stroke-width=".7"/>
<path d="M794.2,769.6 H800 L800.6,781.6 H794.2Z" fill="#a88462" stroke="#6a4e36" stroke-width=".7"/>
<path d="M800.6,772 H805.2 M800.6,775.4 H805.2 M800.6,778.8 H805.2 M800.6,781.4 H805.2" stroke="#5a4632" stroke-width="1.1"/>
<!-- joints icon -->
<g fill="#a98360" stroke="#f3ebe0" stroke-width=".9">
  <rect x="868.6" y="766.8" width="4.6" height="4.8"/><rect x="879" y="766.8" width="4.6" height="4.8"/>
  <rect x="868.6" y="772" width="4.6" height="4.8"/><rect x="879" y="772" width="4.6" height="4.8"/>
  <rect x="868.6" y="777.2" width="4.6" height="4.8"/><rect x="879" y="777.2" width="4.6" height="4.8"/>
  <rect x="873.6" y="766.8" width="5" height="3.4"/><rect x="873.6" y="778.6" width="5" height="3.4"/>
</g>
<rect x="873.4" y="770.6" width="5.6" height="7.6" fill="#fff"/>
<path d="M876.2,771.4 V777.4 M873.4,774.4 H879" stroke="#e01818" stroke-width="2"/>
<!-- auto lower icon -->
<path d="M938.4,768.6 V774.6" stroke="#e02020" stroke-width="1.3"/>
<path d="M936.6,770.4 L938.4,768.2 L940.2,770.4 M936.6,772.8 L938.4,775.2 L940.2,772.8" fill="none" stroke="#e02020" stroke-width="1.1"/>
<rect x="932.2" y="778.4" width="12.6" height="3" fill="#f3dfa2" stroke="#b98a1e" stroke-width=".9"/>
<path d="M936.4,778.4 V781.4 M940.6,778.4 V781.4" stroke="#b98a1e" stroke-width=".8"/>
<!-- wrench -->
<path d="M1031,773.6 L1038.6,779.8" stroke="#f0a020" stroke-width="3.4" stroke-linecap="round"/>
<path d="M1031.4,773 L1037.6,778" stroke="#ffd070" stroke-width="1" stroke-linecap="round"/>
<path d="M1025.4,767.4 Q1023.6,770.6 1026.6,772.2 Q1029,773.4 1031.2,772 L1029.4,769.6 L1029.8,767.4 L1027.4,766.2" fill="#e9edf2" stroke="#a8b0bc" stroke-width=".9"/>

</svg>
<!--CHROME-END-->
</div></div>
</body>
</html>
